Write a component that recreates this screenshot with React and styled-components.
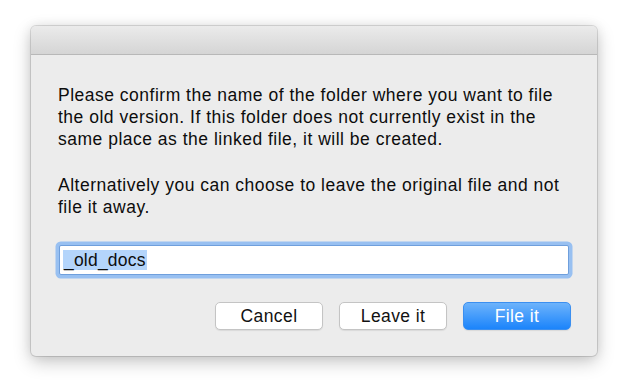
import styled, { createGlobalStyle } from "styled-components";

const Global = createGlobalStyle`
  html, body {
    margin: 0;
    padding: 0;
    background: #ffffff;
  }
  body {
    font-family: "Liberation Sans", Arial, sans-serif;
    -webkit-font-smoothing: antialiased;
  }
`;

const Page = styled.div`
  width: 629px;
  height: 387px;
  padding: 26px 0 0 31px;
  box-sizing: border-box;
`;

const Window = styled.div`
  width: 566px;
  height: 330px;
  display: flex;
  flex-direction: column;
  background: #ececec;
  border-radius: 5px;
  overflow: hidden;
  box-shadow: 0 0 0 1px rgba(0, 0, 0, 0.12), 0 6px 18px rgba(0, 0, 0, 0.22),
    0 0 12px rgba(0, 0, 0, 0.08);
`;

const TitleBar = styled.div`
  height: 28px;
  flex-shrink: 0;
  background: linear-gradient(#ebebeb, #d5d5d5);
  border-bottom: 1px solid #b8b8b8;
`;

const Body = styled.div`
  flex: 1;
  display: flex;
  flex-direction: column;
  padding: 29px 26px 0 24px;
`;

const Message = styled.p`
  margin: 0 0 0 3px;
  font-size: 17.5px;
  letter-spacing: 0.5px;
  line-height: 22px;
  color: #0d0d0d;
  white-space: nowrap;
  & + & {
    margin-top: 24px;
  }
`;

const Field = styled.div`
  margin: 27px 0 0 4px;
  height: 30px;
  width: 510px;
  box-sizing: border-box;
  background: #fff;
  border: 1px solid #6f9fdc;
  border-radius: 2px;
  box-shadow: 0 0 0 3.5px #98c0f1;
  display: flex;
  align-items: center;
  padding-left: 3px;
`;

const Selected = styled.span`
  font-size: 17.5px;
  letter-spacing: 0.2px;
  line-height: 20px;
  color: #0d0d0d;
  background: #b4d5fb;
  padding: 0 1px;
`;

const Buttons = styled.div`
  display: flex;
  justify-content: flex-end;
  gap: 16px;
  margin-top: 27px;
`;

const Button = styled.button`
  width: 108px;
  height: 28px;
  border-radius: 5px;
  font-family: "Liberation Sans", Arial, sans-serif;
  font-size: 17.5px;
  letter-spacing: 0.4px;
  padding: 0;
  cursor: pointer;
  color: ${(p) => (p.$primary ? "#ffffff" : "#111111")};
  background: ${(p) =>
    p.$primary ? "linear-gradient(#6db3fb, #1b84fb)" : "#ffffff"};
  border: 1px solid ${(p) => (p.$primary ? "#3b8ff0" : "#c4c4c4")};
  box-shadow: 0 1px 1px rgba(0, 0, 0, 0.08);
`;

export default function App() {
  return (
    <Page>
      <Global />
      <Window>
        <TitleBar />
        <Body>
          <Message>
            Please confirm the name of the folder where you want to file
            <br />
            the old version. If this folder does not currently exist in the
            <br />
            same place as the linked file, it will be created.
          </Message>
          <Message>
            Alternatively you can choose to leave the original file and not
            <br />
            file it away.
          </Message>
          <Field>
            <Selected>_old_docs</Selected>
          </Field>
          <Buttons>
            <Button>Cancel</Button>
            <Button>Leave it</Button>
            <Button $primary>File it</Button>
          </Buttons>
        </Body>
      </Window>
    </Page>
  );
}
